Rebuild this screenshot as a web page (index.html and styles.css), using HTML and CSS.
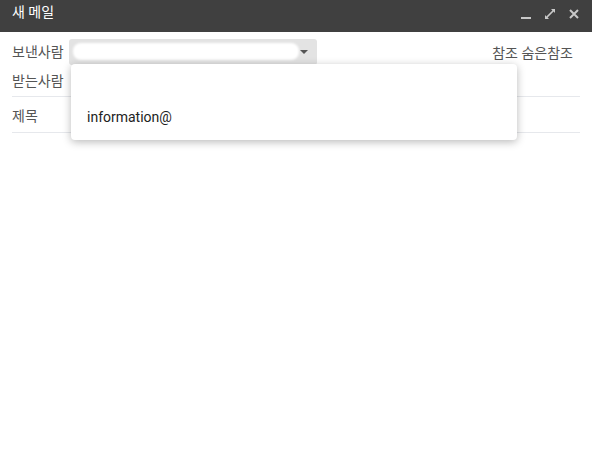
FILE: index.html
```html
<!DOCTYPE html>
<html lang="ko">
<head>
    <meta charset="UTF-8">
    <title>새 메일</title>
    <link rel="stylesheet" href="styles.css">
</head>
<body>
    <div class="compose">
        <header class="titlebar">
            <span class="title">새 메일</span>
            <div class="controls">
                <svg width="12" height="12" viewBox="0 0 12 12"><rect x="1" y="9" width="10" height="2" fill="#c8c8c8"/></svg>
                <svg width="12" height="12" viewBox="0 0 12 12"><path d="M7 1h4v4L9.6 3.6 3.6 9.6 5 11H1V7l1.4 1.4 6-6z" fill="#c8c8c8"/></svg>
                <svg width="12" height="12" viewBox="0 0 12 12"><path d="M2 2l8 8M10 2l-8 8" stroke="#c8c8c8" stroke-width="2"/></svg>
            </div>
        </header>

        <div class="fields">
            <div class="row from">
                <span class="label">보낸사람</span>
                <div class="select">
                    <div class="blur"></div>
                    <span class="caret"></span>
                </div>
                <span class="cc">참조 숨은참조</span>
            </div>
            <div class="row line to">
                <span class="label">받는사람</span>
            </div>
            <div class="row line subject">
                <span class="label">제목</span>
            </div>

            <div class="menu">
                <div class="item"></div>
                <div class="item">information@</div>
            </div>
        </div>
    </div>
</body>
</html>
```

FILE: styles.css
```css
body {
    margin: 0;
    font-family: Roboto, "Noto Sans CJK KR", sans-serif;
    background: #fff;
    color: #222;
}
.compose {
    width: 592px;
    height: 450px;
}
.titlebar {
    background-color: #404040;
    height: 32px;
    display: flex;
    align-items: center;
    justify-content: space-between;
    padding: 0 12px;
}
.title {
    color: #fff;
    font-size: 14px;
    margin-top: -10px;
}
.controls {
    display: flex;
    gap: 12px;
    margin-top: -5px;
}
.fields {
    position: relative;
    padding: 0 12px;
}
.row {
    display: flex;
    align-items: center;
    font-size: 14px;
}
.label {
    color: #555;
}
.from {
    height: 38px;
}
.select {
    position: relative;
    margin-left: 5px;
    margin-top: 1px;
    width: 248px;
    height: 26px;
    background-color: #e3e3e3;
    border-radius: 3px;
}
.blur {
    position: absolute;
    left: 4px;
    top: 4px;
    width: 226px;
    height: 17px;
    background: #fff;
    border-radius: 8px;
    filter: blur(1px);
}
.caret {
    position: absolute;
    right: 9px;
    top: 11px;
    border-left: 4px solid transparent;
    border-right: 4px solid transparent;
    border-top: 4px solid #555;
}
.cc {
    margin-left: auto;
    margin-right: 7px;
    margin-top: 1px;
    color: #555;
}
.line {
    border-bottom: 1px solid #e6e8ec;
}
.to {
    height: 24px;
    padding-bottom: 2px;
    align-items: flex-start;
}
.subject {
    height: 35px;
}
.menu {
    position: absolute;
    left: 71px;
    top: 32px;
    width: 446px;
    height: 76px;
    background: #fff;
    border-radius: 4px;
    box-shadow: 0 2px 8px rgba(0, 0, 0, 0.28);
}
.item {
    height: 35px;
    display: flex;
    align-items: center;
    padding-left: 16px;
    font-size: 14px;
    color: #222;
}
.item + .item {
    height: 36px;
    padding-bottom: 5px;
}
```
